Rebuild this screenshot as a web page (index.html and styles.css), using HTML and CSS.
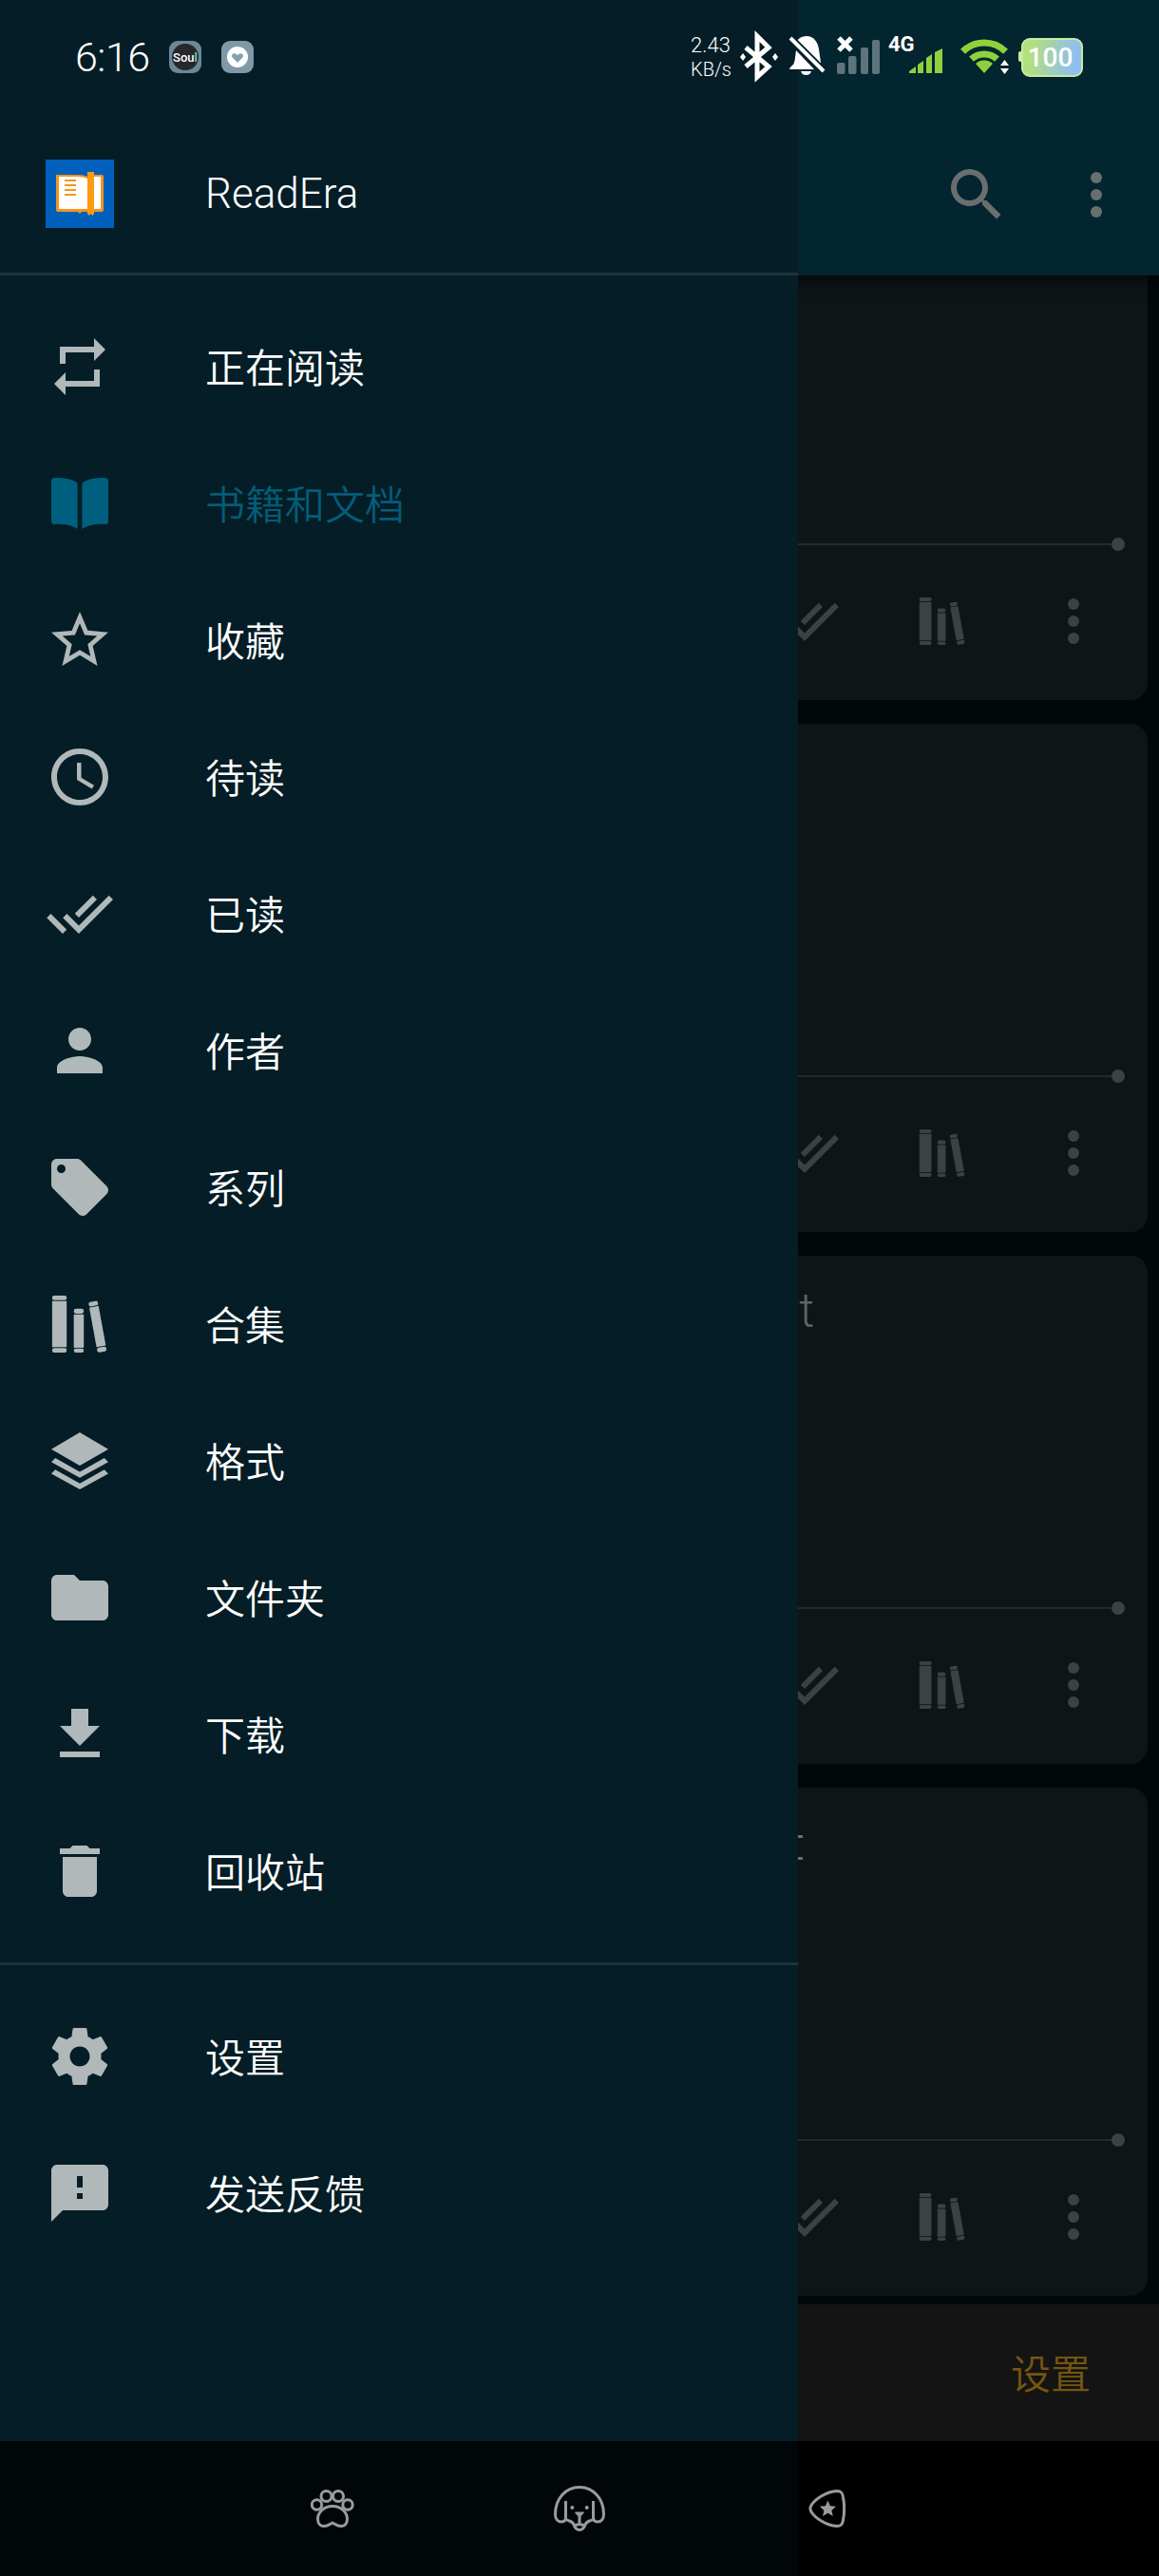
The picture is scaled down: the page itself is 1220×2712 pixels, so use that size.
FILE: index.html
```html
<!DOCTYPE html>
<html lang="zh-CN">
  <head>
    <meta charset="utf-8">
    <title>ReadEra</title>
    <meta name="viewport" content="width=device-width, initial-scale=1.0">
    <link rel="stylesheet" href="styles.css">
  </head>
  <body>
    <svg class="defs" aria-hidden="true">
      <symbol id="i-books" viewBox="0 0 24 24">
        <rect x="2.3" y="2" width="5.1" height="1.6" rx=".7"/>
        <rect x="2.3" y="3.9" width="5.1" height="16.2"/>
        <rect x="2.3" y="20.4" width="5.1" height="1.6" rx=".7"/>
        <rect x="9.9" y="6.6" width="3.5" height="1.7" rx=".8"/>
        <rect x="9.9" y="8.6" width="3.5" height="11.7"/>
        <rect x="9.9" y="20.6" width="3.5" height="1.4" rx=".7"/>
        <g transform="rotate(-10.4 18.25 13)">
          <rect x="16.6" y="3.9" width="3.3" height="1.6" rx=".7"/>
          <rect x="16.6" y="5.8" width="3.3" height="14.1"/>
          <rect x="16.6" y="20.2" width="3.3" height="1.7" rx=".7"/>
        </g>
      </symbol>
      <symbol id="i-done" viewBox="0 0 24 24">
        <path d="M18 7l-1.41-1.41-6.34 6.34 1.41 1.41L18 7zm4.24-1.41L11.66 16.17 7.48 12l-1.41 1.41L11.66 19l12-12-1.42-1.41zM.41 13.41L6 19l1.41-1.41L1.83 12 .41 13.41z"/>
      </symbol>
      <symbol id="i-more" viewBox="0 0 24 24">
        <circle cx="12" cy="6" r="2"/><circle cx="12" cy="12" r="2"/><circle cx="12" cy="18" r="2"/>
      </symbol>
    </svg>

    <div class="phone">
      <main class="library">
        <header class="appbar">
          <svg class="appbar-icon" viewBox="0 0 24 24"><path d="M15.5 14h-.79l-.28-.27C15.41 12.59 16 11.11 16 9.5 16 5.91 13.09 3 9.5 3S3 5.91 3 9.5 5.91 16 9.5 16c1.61 0 3.09-.59 4.23-1.57l.27.28v.79l5 4.99L20.49 19l-4.99-5zm-6 0C7.01 14 5 11.99 5 9.5S7.01 5 9.5 5 14 7.01 14 9.5 11.99 14 9.5 14z"/></svg>
          <svg class="appbar-icon"><use href="#i-more"/></svg>
        </header>

        <div class="cards">
          <article class="card">
            <div class="progress"></div>
            <div class="card-actions">
              <svg class="act act-done"><use href="#i-done"/></svg>
              <svg class="act act-books"><use href="#i-books"/></svg>
              <svg class="act"><use href="#i-more"/></svg>
            </div>
          </article>
          <article class="card">
            <div class="progress"></div>
            <div class="card-actions">
              <svg class="act act-done"><use href="#i-done"/></svg>
              <svg class="act act-books"><use href="#i-books"/></svg>
              <svg class="act"><use href="#i-more"/></svg>
            </div>
          </article>
          <article class="card">
            <div class="card-title">xt</div>
            <div class="progress"></div>
            <div class="card-actions">
              <svg class="act act-done"><use href="#i-done"/></svg>
              <svg class="act act-books"><use href="#i-books"/></svg>
              <svg class="act"><use href="#i-more"/></svg>
            </div>
          </article>
          <article class="card">
            <div class="card-cut"></div>
            <div class="progress"></div>
            <div class="card-actions">
              <svg class="act act-done"><use href="#i-done"/></svg>
              <svg class="act act-books"><use href="#i-books"/></svg>
              <svg class="act"><use href="#i-more"/></svg>
            </div>
          </article>
        </div>

        <div class="footer-bar"><span class="footer-btn">设置</span></div>

        <nav class="nav-bar">
          <div class="nav-btn">
            <svg class="nav-icon" width="46" height="40" viewBox="0 0 46 40">
              <circle cx="6.5" cy="16" r="5.2"/><circle cx="16.5" cy="7" r="5.5"/><circle cx="29" cy="7" r="5.5"/><circle cx="39" cy="16" r="5.2"/>
              <path d="M23 17.5C13 17.5 7.5 25 7.5 31c0 5 3 7.5 6.5 7.5 4 0 6-2 9-3.5 3 1.5 5 3.5 9 3.5 3.5 0 6.5-2.5 6.5-7.5 0-6-5.5-13.5-15.5-13.5z"/>
            </svg>
          </div>
          <div class="nav-btn">
            <svg class="nav-icon" width="54" height="48" viewBox="0 0 54 48">
              <path d="M12.5 33V16M12.5 33c0 3-1.5 5-4.5 5-4 0-6.5-3-6.5-8C1.5 14 12 1.5 27 1.5S52.5 14 52.5 30c0 5-2.5 8-6.500 8-3 0-4.500-2-4.500-5V16"/>
              <path d="M12.5 35c3 3 6.5 1 8.5 6 1 3 3 5.5 6 5.5s5-2.5 6-5.5c2-5 5.5-3 8.5-6M27 32v8M21 41c3 1 4.5 0 6-1 1.5 1 3 2 6 1"/>
              <path class="nav-fill" d="M23 27.5h8c.8 0 1 .8.5 1.4L28 32.5c-.5.5-1.5.5-2 0l-3.5-3.6c-.5-.6-.3-1.4.5-1.4z"/>
              <circle class="nav-fill" cx="19.3" cy="23" r="2"/><circle class="nav-fill" cx="34.7" cy="23" r="2"/>
            </svg>
          </div>
          <div class="nav-btn">
            <svg class="nav-icon" width="39" height="40" viewBox="0 0 39 40">
              <path d="M3 16.5C7 10 19 2 30 1.5c5 0 6 2.5 6.5 6.5 1.5 8 1.5 16 0 24-.5 4-1.5 6.5-6.5 6.5C19 38 7 30 3 23.5c-1.5-2.5-1.5-4.5 0-7z"/>
              <path class="nav-fill" d="M20.4 11.5l2.5 5.7 6.1.6-4.6 4.1 1.4 6.1-5.4-3.2-5.4 3.2 1.4-6.1-4.6-4.1 6.1-.6z"/>
            </svg>
          </div>
        </nav>
      </main>

      <aside class="drawer">
        <div class="drawer-head">
          <svg class="app-logo" width="72" height="72" viewBox="0 0 72 72">
            <rect width="72" height="72" fill="#0160bb"/>
            <path d="M11 16h22q8 0 11 2v37H38l-2 2-2-2H13q-2 0-2-2z" fill="#f7941e"/>
            <path d="M51 16h8q2 0 2 2v35q0 2-2 2h-8z" fill="#f7941e"/>
            <path d="M14 18h18q8 0 12 2v32H14z" fill="#fff"/>
            <path d="M51 18h7v34h-7z" fill="#fff"/>
            <path d="M44 13h7v44l-1.5 2-2-2-2 2-1.5-2z" fill="#fd9a0e"/>
            <path d="M20 21h12v2H20zm0 5h12v2H20zm0 5h12v2H20zm0 5h12v2H20z" fill="#f7941e"/>
          </svg>
          <span class="app-name">ReadEra</span>
        </div>

        <ul class="menu">
          <li class="menu-item">
            <svg class="menu-icon" viewBox="0 0 24 24"><path d="M7 7h10v3l4-4-4-4v3H5v6h2V7zm10 10H7v-3l-4 4 4 4v-3h12v-6h-2v4z"/></svg>
            <span>正在阅读</span>
          </li>
          <li class="menu-item is-active">
            <svg class="menu-icon" viewBox="0 0 24 24"><path d="M2 4.2c0-.8.5-1.2 1.2-1.2 3.3 0 6 .4 8 1.8V21c-2-1.3-5-1.9-8-1.7-.7 0-1.2-.3-1.2-1zM22 4.2c0-.8-.5-1.2-1.2-1.2-3.3 0-6 .4-8 1.8V21c2-1.3 5-1.9 8-1.7.7 0 1.2-.3 1.2-1z"/></svg>
            <span>书籍和文档</span>
          </li>
          <li class="menu-item">
            <svg class="menu-icon" viewBox="0 0 24 24"><path d="M22 9.24l-7.19-.62L12 2 9.19 8.63 2 9.24l5.46 4.73L5.82 21 12 17.27 18.18 21l-1.63-7.03L22 9.24zM12 15.4l-3.76 2.27 1-4.28-3.32-2.88 4.38-.38L12 6.1l1.71 4.04 4.38.38-3.32 2.88 1 4.28L12 15.4z"/></svg>
            <span>收藏</span>
          </li>
          <li class="menu-item">
            <svg class="menu-icon" viewBox="0 0 24 24"><path d="M11.99 2C6.47 2 2 6.48 2 12s4.47 10 9.99 10C17.52 22 22 17.52 22 12S17.52 2 11.99 2zM12 20c-4.42 0-8-3.58-8-8s3.58-8 8-8 8 3.58 8 8-3.58 8-8 8zm.5-13H11v6l5.25 3.15.75-1.23-4.5-2.67z"/></svg>
            <span>待读</span>
          </li>
          <li class="menu-item">
            <svg class="menu-icon"><use href="#i-done"/></svg>
            <span>已读</span>
          </li>
          <li class="menu-item">
            <svg class="menu-icon" viewBox="0 0 24 24"><path d="M12 12c2.21 0 4-1.79 4-4s-1.79-4-4-4-4 1.79-4 4 1.79 4 4 4zm0 2c-2.67 0-8 1.34-8 4v2h16v-2c0-2.66-5.33-4-8-4z"/></svg>
            <span>作者</span>
          </li>
          <li class="menu-item">
            <svg class="menu-icon" viewBox="0 0 24 24"><path d="M21.41 11.58l-9-9C12.05 2.22 11.55 2 11 2H4c-1.1 0-2 .9-2 2v7c0 .55.22 1.05.59 1.42l9 9c.36.36.86.58 1.41.58.55 0 1.05-.22 1.41-.59l7-7c.37-.36.59-.86.59-1.41 0-.55-.23-1.06-.59-1.42zM5.5 7C4.67 7 4 6.33 4 5.5S4.67 4 5.5 4 7 4.67 7 5.5 6.33 7 5.5 7z"/></svg>
            <span>系列</span>
          </li>
          <li class="menu-item">
            <svg class="menu-icon"><use href="#i-books"/></svg>
            <span>合集</span>
          </li>
          <li class="menu-item">
            <svg class="menu-icon" viewBox="0 0 24 24"><path d="M12 2l10 5.9-10 5.8L2 7.9zM2 12.4L3.4 11 12 15.8 20.6 11l1.4 1.4-10 5.5zM2 16.5l1.4-1.4 8.6 4.8 8.6-4.8 1.4 1.4L12 22z"/></svg>
            <span>格式</span>
          </li>
          <li class="menu-item">
            <svg class="menu-icon" viewBox="0 0 24 24"><path d="M10 4H4c-1.1 0-1.99.9-1.99 2L2 18c0 1.1.9 2 2 2h16c1.1 0 2-.9 2-2V8c0-1.1-.9-2-2-2h-8l-2-2z"/></svg>
            <span>文件夹</span>
          </li>
          <li class="menu-item">
            <svg class="menu-icon" viewBox="0 0 24 24"><path d="M19 9h-4V3H9v6H5l7 7 7-7zM5 18v2h14v-2H5z"/></svg>
            <span>下载</span>
          </li>
          <li class="menu-item">
            <svg class="menu-icon" viewBox="0 0 24 24"><path d="M6 19c0 1.1.9 2 2 2h8c1.1 0 2-.9 2-2V7H6v12zM19 4h-3.5l-1-1h-5l-1 1H5v2h14V4z"/></svg>
            <span>回收站</span>
          </li>
        </ul>

        <ul class="menu menu-bottom">
          <li class="menu-item">
            <svg class="menu-icon" viewBox="0 0 24 24"><path d="M19.43 12.98c.04-.32.07-.64.07-.98s-.03-.66-.07-.98l2.11-1.65c.19-.15.24-.42.12-.64l-2-3.46c-.12-.22-.39-.3-.61-.22l-2.49 1c-.52-.4-1.08-.73-1.69-.98l-.38-2.65C14.46 2.18 14.25 2 14 2h-4c-.25 0-.46.18-.49.42l-.38 2.65c-.61.25-1.17.59-1.69.98l-2.49-1c-.23-.09-.49 0-.61.22l-2 3.46c-.13.22-.07.49.12.64l2.11 1.65c-.04.32-.07.65-.07.98s.03.66.07.98l-2.11 1.65c-.19.15-.24.42-.12.64l2 3.46c.12.22.39.3.61.22l2.49-1c.52.4 1.08.73 1.69.98l.38 2.65c.03.24.24.42.49.42h4c.25 0 .46-.18.49-.42l.38-2.65c.61-.25 1.17-.59 1.69-.98l2.49 1c.23.09.49 0 .61-.22l2-3.46c.12-.22.07-.49-.12-.64l-2.11-1.65zM12 15.5c-1.93 0-3.5-1.57-3.5-3.5s1.57-3.5 3.5-3.5 3.5 1.57 3.5 3.5-1.57 3.5-3.5 3.5z"/></svg>
            <span>设置</span>
          </li>
          <li class="menu-item">
            <svg class="menu-icon" viewBox="0 0 24 24"><path d="M20 2H4c-1.1 0-1.99.9-1.99 2L2 22l4-4h14c1.1 0 2-.9 2-2V4c0-1.1-.9-2-2-2zm-7 12h-2v-2h2v2zm0-4h-2V6h2v4z"/></svg>
            <span>发送反馈</span>
          </li>
        </ul>
      </aside>

      <div class="status-bar">
        <span class="clock">6:16</span>
        <svg class="notif" width="34" height="34" viewBox="0 0 34 34">
          <rect width="34" height="34" rx="9" fill="#6d8799"/>
          <circle cx="17" cy="17" r="14" fill="#26282b"/>
          <text x="17" y="22" text-anchor="middle" class="notif-text">Sou<tspan fill="#5fe0d0">l</tspan></text>
        </svg>
        <svg class="notif" width="34" height="34" viewBox="0 0 34 34">
          <rect width="34" height="34" rx="9" fill="#7f99a9"/>
          <circle cx="17" cy="17" r="11" fill="#fff"/>
          <path d="M17 23l-5.3-5.4c-1.5-1.6-.4-4.3 1.8-4.3 1.5 0 2.7.8 3.5 2 .8-1.2 2-2 3.5-2 2.2 0 3.3 2.7 1.8 4.3z" fill="#86a0b0"/>
        </svg>

        <div class="status-right">
          <div class="net-speed">2.43<br><span class="net-unit">KB/s</span></div>
          <svg class="status-icon" width="40" height="48" viewBox="0 0 40 48">
            <path d="M6 14l24 20-12 11V2l12 12L6 34" fill="none" stroke="#fff" stroke-width="5"/>
            <path d="M3 20l3 4-3 4-3-4zM37 20l3 4-3 4-3-4z" fill="#fff"/>
          </svg>
          <svg class="status-icon" width="39" height="48" viewBox="0 0 39 48">
            <path d="M6 12c2-6 7-10 13-10 8 0 12 7 13 14l2 14-3 3z" fill="#fff"/>
            <path d="M8 17l19 20H1c0-2 2-3 4-5 2-3 2-9 3-15z" fill="#fff"/>
            <path d="M13 39h11c-1 3-3 4-5.5 4S14 42 13 39z" fill="#fff"/>
            <path d="M-1 1l38 38" stroke="#041d26" stroke-width="8"/>
            <path d="M2 4l35 35" stroke="#fff" stroke-width="4"/>
          </svg>
          <svg class="status-icon sig-off" width="46" height="48" viewBox="0 0 46 48">
            <path d="M3 4l13 13M16 4L3 17" stroke="#fff" stroke-width="5"/>
            <g fill="#5f747c">
              <rect x="1" y="30" width="8.5" height="12" rx="2"/>
              <rect x="13" y="23" width="8.5" height="19" rx="2"/>
              <rect x="26" y="14" width="8" height="28" rx="2"/>
              <rect x="38" y="6" width="8" height="36" rx="2"/>
            </g>
          </svg>
          <svg class="status-icon sim" width="58" height="48" viewBox="0 0 58 48">
            <text x="0" y="17.5" class="sim-text">4G</text>
            <path d="M22 41v-2l7-5v7zM31 41v-9l6-4v13zM40 41V25l6-4v20zM49 41V19l8-4v26z" fill="#8fd13c"/>
          </svg>
          <svg class="status-icon wifi" width="51" height="48" viewBox="0 0 51 48">
            <g fill="none" stroke="#8fd13c" stroke-width="7">
              <path d="M2.5 18.3A32 32 0 0 1 47.5 18.3"/>
              <path d="M11.5 26.2A20 20 0 0 1 38.5 26.2"/>
            </g>
            <path d="M25 41l-9-10a13.5 13.5 0 0 1 18 0z" fill="#8fd13c"/>
            <path d="M46.5 27l4.5 6h-9zM42 36h9l-4.5 6z" fill="#fff"/>
          </svg>
          <div class="battery">100</div>
        </div>
      </div>
    </div>
  </body>
</html>
```

FILE: styles.css
```css
html, body {
  margin: 0;
  padding: 0;
}
body {
  background-color: #01080a;
  font-family: "Noto Sans CJK SC", Roboto, sans-serif;
}
ul {
  margin: 0;
  padding: 0;
  list-style: none;
}
svg {
  display: block;
  fill: currentColor;
}
.defs {
  width: 0;
  height: 0;
}
.phone {
  position: relative;
  width: 1220px;
  height: 2712px;
  overflow: hidden;
}

/* page behind the drawer */
.library {
  display: flex;
  flex-direction: column;
  height: 100%;
}
.appbar {
  position: relative;
  z-index: 1;
  flex: none;
  display: flex;
  justify-content: flex-end;
  gap: 54px;
  box-sizing: border-box;
  height: 290px;
  padding: 169px 30px 0 0;
  background-color: #02252f;
  box-shadow: 0 6px 14px rgba(0, 0, 0, .6);
  color: #6b6e6f;
}
.appbar-icon {
  width: 72px;
  height: 72px;
}
.cards {
  flex: 1;
  min-height: 0;
  display: flex;
  flex-direction: column;
  gap: 25px;
  padding: 0 12px;
  overflow: hidden;
}
.card {
  flex: none;
  display: flex;
  flex-direction: column;
  box-sizing: border-box;
  height: 535px;
  padding: 0 24px 47px;
  background-color: #0d1517;
  border-radius: 18px;
  color: #3c4142;
}
.card:first-child {
  margin-top: -88px;
}
.card-title {
  margin-top: 30px;
  padding-left: 781px;
  color: #606263;
  font: 300 50px/56px Roboto, sans-serif;
}
.card-cut {
  width: 10px;
  height: 20px;
  margin: 50px 0 0 799px;
  border-top: 3px solid #6b6d6e;
  border-bottom: 3px solid #6b6d6e;
}
.progress {
  position: relative;
  height: 2px;
  margin-top: auto;
  margin-bottom: 44px;
  background-color: #222a2c;
}
.progress::after {
  content: "";
  position: absolute;
  right: 0;
  top: -6px;
  width: 14px;
  height: 14px;
  border-radius: 50%;
  background-color: #3c4142;
}
.card-actions {
  display: flex;
  justify-content: flex-end;
  align-items: center;
  height: 72px;
  padding-right: 18px;
}
.act {
  width: 72px;
  height: 72px;
}
.act-books {
  width: 60px;
  height: 60px;
  margin-right: 72px;
}
.act-done {
  margin-right: 78px;
}
.footer-bar {
  flex: none;
  display: flex;
  justify-content: flex-end;
  align-items: center;
  box-sizing: border-box;
  height: 144px;
  padding: 0 72px 3px 0;
  background-color: #141414;
}
.footer-btn {
  color: #75560f;
  font-size: 42px;
  font-weight: 350;
}
.nav-bar {
  flex: none;
  display: flex;
  justify-content: center;
  align-items: center;
  height: 142px;
  background: linear-gradient(to right, #010608 840px, #000 840px);
}
.nav-btn {
  display: flex;
  justify-content: center;
  width: 260px;
}
.nav-icon {
  fill: none;
  stroke: #9a9c9c;
  stroke-width: 3;
}
.nav-fill {
  fill: #9a9c9c;
  stroke: none;
}

/* drawer */
.drawer {
  position: absolute;
  z-index: 2;
  top: 0;
  left: 0;
  bottom: 142px;
  width: 840px;
  background-color: #041d26;
}
.drawer-head {
  display: flex;
  align-items: center;
  gap: 96px;
  box-sizing: border-box;
  height: 290px;
  padding: 124px 0 3px 48px;
  border-bottom: 3px solid #1f333b;
  color: #fff;
}
.app-name {
  font: 300 44px/1 Roboto, sans-serif;
}
.menu {
  padding: 24px 0;
  border-bottom: 3px solid #1f333b;
}
.menu-bottom {
  border-bottom: 0;
}
.menu-item {
  display: flex;
  align-items: center;
  gap: 96px;
  height: 144px;
  padding-left: 48px;
  color: #fff;
  font-size: 42px;
  font-weight: 350;
  line-height: 1;
}
.menu-item span {
  margin-top: -2px;
}
.menu-icon {
  flex: none;
  width: 72px;
  height: 72px;
  color: #b0b8ba;
}
.is-active {
  color: #045c78;
}
.is-active .menu-icon {
  color: #005f7f;
}

/* status bar, lies over drawer and page */
.status-bar {
  position: absolute;
  z-index: 3;
  top: 36px;
  left: 0;
  right: 0;
  display: flex;
  align-items: center;
  height: 48px;
  padding: 0 80px;
  color: #fff;
}
.clock {
  width: 98px;
  margin-left: -1px;
  margin-right: 1px;
  font: 300 43px/48px Roboto, sans-serif;
  letter-spacing: -.5px;
}
.notif {
  margin-right: 21px;
}
.notif-text {
  fill: #fff;
  font: 500 13px "Liberation Sans Narrow", Roboto, sans-serif;
}
.status-right {
  display: flex;
  align-items: center;
  margin-left: auto;
}
.net-speed {
  width: 42px;
  margin-right: 10px;
  font: 300 22px/25px Roboto, sans-serif;
  text-align: center;
  white-space: nowrap;
}
.net-unit {
  font-size: 20px;
}
.status-icon {
  flex: none;
  margin-right: 11px;
  overflow: visible;
}
.sig-off {
  margin-right: 9px;
}
.sim {
  margin-right: 18px;
}
.wifi {
  margin-right: 13px;
}
.sim-text {
  fill: #fff;
  font: 700 22px Roboto, sans-serif;
}
.battery {
  position: relative;
  box-sizing: border-box;
  width: 65px;
  height: 41px;
  padding-right: 4px;
  border: 2px solid #c8eaa4;
  border-radius: 9px;
  background: linear-gradient(100deg, #b2e07e 15%, #8fbfee 85%);
  font: 500 28px/37px Roboto, sans-serif;
  text-align: center;
}
.battery::before {
  content: "";
  position: absolute;
  left: -5px;
  top: 12px;
  width: 3px;
  height: 11px;
  border-radius: 2px 0 0 2px;
  background-color: #c8eaa4;
}
```
